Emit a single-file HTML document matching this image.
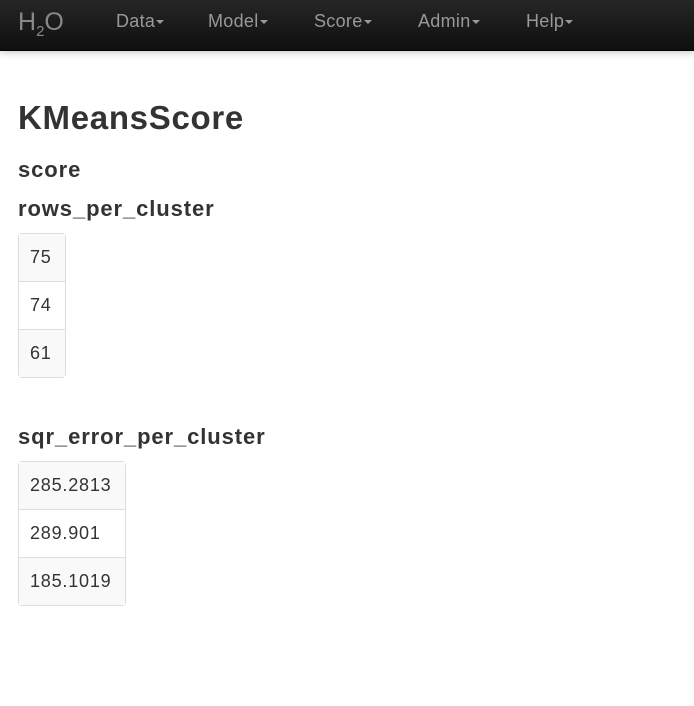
<!DOCTYPE html>
<html><head><style>
body{margin:0;font-family:"Liberation Sans",Arial,sans-serif;color:#333;background:#fff;width:694px;height:706px;overflow:hidden;position:relative}
.nav{position:absolute;left:0;top:0;width:694px;height:50px;background:linear-gradient(#262626,#0f0f0f);border-bottom:1px solid #000;box-shadow:0 1px 8px rgba(0,0,0,.25)}
.nav span{position:absolute;top:11px;font-size:18px;color:#999;letter-spacing:0.3px}
.car{display:inline-block;border-top:4px solid #999;border-left:4px solid transparent;border-right:4px solid transparent;vertical-align:middle;margin-left:1px}
.brand{font-size:25px!important;top:8px!important;left:18px;color:#888!important;letter-spacing:0!important}
.brand sub{font-size:15px}
h1,h3{position:absolute;left:18px;margin:0;font-weight:bold;white-space:nowrap}
h1{font-size:33px;top:99px;letter-spacing:0.7px}
h3{font-size:22px;letter-spacing:0.9px}
table{position:absolute;left:18px;border-collapse:separate;border-spacing:0;border:1px solid #ddd;border-radius:4px;font-size:18px;letter-spacing:0.8px}
td{height:47px;padding:0 11px;border-top:1px solid #ddd}
tr:first-child td{border-top:none}
tr:nth-child(odd) td{background:#f9f9f9}
</style></head><body>
<div class="nav">
<span class="brand">H<sub>2</sub>O</span>
<span style="left:116px">Data<i class="car"></i></span>
<span style="left:208px">Model<i class="car"></i></span>
<span style="left:314px">Score<i class="car"></i></span>
<span style="left:418px">Admin<i class="car"></i></span>
<span style="left:526px">Help<i class="car"></i></span>
</div>
<h1>KMeansScore</h1>
<h3 style="top:157px">score</h3>
<h3 style="top:196px">rows_per_cluster</h3>
<table style="top:233px;width:48px"><tr><td>75</td></tr><tr><td>74</td></tr><tr><td>61</td></tr></table>
<h3 style="top:424px">sqr_error_per_cluster</h3>
<table style="top:461px;width:108px"><tr><td>285.2813</td></tr><tr><td>289.901</td></tr><tr><td>185.1019</td></tr></table>
</body></html>
